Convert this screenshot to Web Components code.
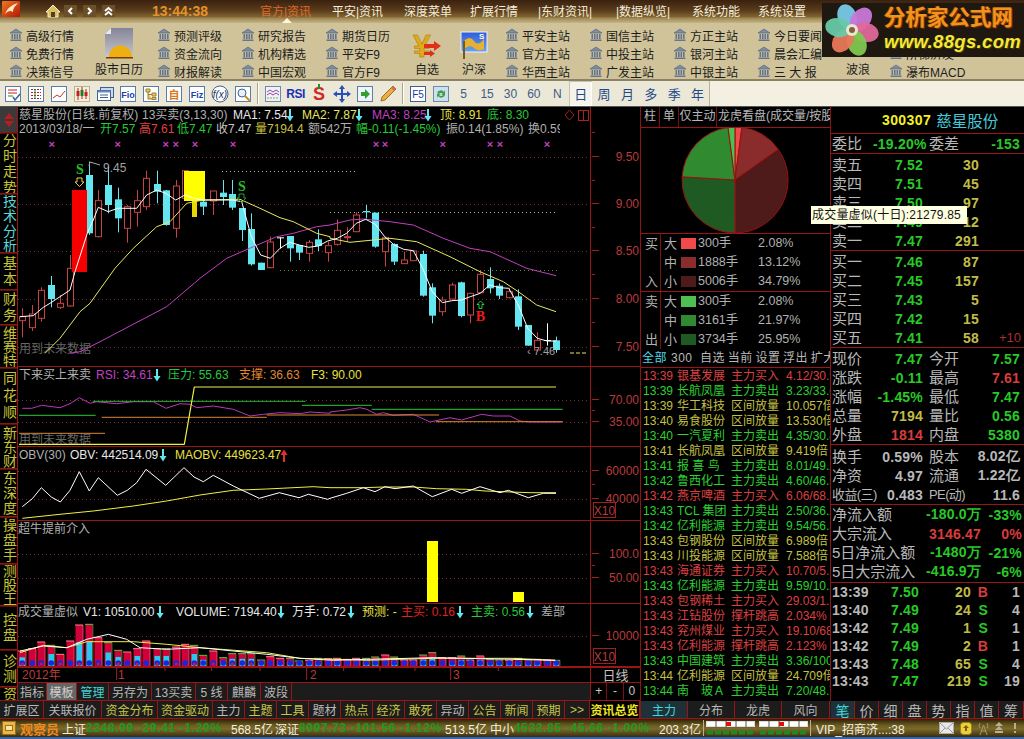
<!doctype html>
<html lang="zh"><head><meta charset="utf-8"><title>分析家</title>
<style>
html,body{margin:0;width:1024px;height:739px;overflow:hidden;background:#000}
body{font:12px "Liberation Sans","Noto Sans CJK SC",sans-serif;color:#b8b8b8}
</style></head>
<body>
<app-shell>
  <top-bar slot="top"></top-bar>
  <tool-bar slot="tools"></tool-bar>
  <icon-bar slot="icons"></icon-bar>
  <side-rail slot="rail"></side-rail>
  <chart-col slot="chart">
    <k-pane kind="main" top="107" h="259"></k-pane>
    <k-pane kind="rsi" top="366" h="80"></k-pane>
    <k-pane kind="obv" top="446" h="74"></k-pane>
    <k-pane kind="bull" top="520" h="83"></k-pane>
    <k-pane kind="vol" top="603" h="63"></k-pane>
    <x-axis></x-axis>
    <tab-row style="--h:18px;--w:622px">
      <s-tab w="29">指标</s-tab><s-tab w="30" tone="sel">模板</s-tab><s-tab w="32" tone="c">管理</s-tab><s-tab w="43">另存为</s-tab><s-tab w="44">13买卖</s-tab><s-tab w="32">5 线</s-tab><s-tab w="33">麒麟</s-tab><s-tab w="31">波段</s-tab>
      <pm-box slot="end"></pm-box>
    </tab-row>
  </chart-col>
  <pie-panel slot="pie"></pie-panel>
  <quote-panel slot="quote"></quote-panel>
  <tab-row slot="strip" style="--h:18px;--w:640px">
    <s-tab w="44">扩展区</s-tab><s-tab w="58">关联报价</s-tab><s-tab w="56" tone="y">资金分布</s-tab><s-tab w="55" tone="y">资金驱动</s-tab><s-tab w="32">主力</s-tab><s-tab w="32" tone="y">主题</s-tab><s-tab w="32" tone="y">工具</s-tab><s-tab w="32">题材</s-tab><s-tab w="32" tone="y">热点</s-tab><s-tab w="32" tone="y">经济</s-tab><s-tab w="32" tone="y">敢死</s-tab><s-tab w="32">异动</s-tab><s-tab w="32" tone="y">公告</s-tab><s-tab w="32" tone="y">新闻</s-tab><s-tab w="32" tone="y">预期</s-tab><s-tab w="25" tone="y">&gt;&gt;</s-tab><s-tab w="50" tone="hot">资讯总览</s-tab>
  </tab-row>
  <tab-row slot="strip2" style="--h:18px;--w:190px">
    <s-tab w="47" tone="teal">主力</s-tab><s-tab w="47">分布</s-tab><s-tab w="47">龙虎</s-tab><s-tab w="48">风向</s-tab>
  </tab-row>
  <tab-row slot="strip3" style="--h:18px;--w:193px">
    <s-tab w="24" tone="teal" big>笔</s-tab><s-tab w="24" big>价</s-tab><s-tab w="24" big>细</s-tab><s-tab w="24" big>盘</s-tab><s-tab w="24" big>势</s-tab><s-tab w="24" big>指</s-tab><s-tab w="24" big>值</s-tab><s-tab w="25" big>筹</s-tab>
  </tab-row>
  <status-bar slot="status"></status-bar>
  <logo-badge slot="over"></logo-badge>
  <float-tip slot="over">成交量虚似(十日):21279.85</float-tip>
</app-shell>
<script>
function def(name,css,html){
  class C extends HTMLElement{
    constructor(){super();const r=this.attachShadow({mode:'open'});
      r.innerHTML='<style>'+css+'</style>'+(typeof html==='function'?html(this):html);}
  }
  customElements.define(name,C);
}
/* ---------- shell ---------- */
def('app-shell',`
:host{display:grid;position:relative;width:1024px;height:739px;overflow:hidden;background:#000;
 grid-template-columns:18px 622px 1px 189px 1px 193px;grid-template-rows:23px 58px 26px 594px 18px 18px 2px}
.top{grid-column:1/-1}.s1{grid-column:1/3;grid-row:5}.s2{grid-column:4;grid-row:5}.s3{grid-column:6;grid-row:5}
.st{grid-column:1/-1;grid-row:6}.bl{grid-column:1/-1;grid-row:7;background:#2f66b4}
.v{background:#8e1414;grid-row:4/6}
`,`<div class="top"><slot name="top"></slot></div><div class="top"><slot name="tools"></slot></div><div class="top"><slot name="icons"></slot></div>
<slot name="rail"></slot><slot name="chart"></slot><div class="v"></div><slot name="pie"></slot><div class="v"></div><slot name="quote"></slot>
<div class="s1"><slot name="strip"></slot></div><div class="s2"><slot name="strip2"></slot></div><div class="s3"><slot name="strip3"></slot></div>
<div class="st"><slot name="status"></slot></div><div class="bl"></div><slot name="over"></slot>`);

/* ---------- top bar ---------- */
const menu=[['官方|资讯',260,'#e06a28'],['平安|资讯',332],['深度菜单',404],['扩展行情',470],['|东财资讯|',538],['|数据纵览|',616],['系统功能',692],['系统设置',758],['',806]];
def('top-bar',`
:host{display:flex;height:23px;position:relative;box-sizing:border-box;padding-bottom:2px;align-items:center;color:#f0ead8;
 background:linear-gradient(#3a2110 0,#5a3b1b 45%,#7f6230 72%,#a08a55 80%,#c5b487 100%)}
.lg{width:18px;height:16px;margin-left:2px;margin-top:-3px}
.n{display:flex;align-items:center;margin-left:25px;width:80px}
.n svg{display:block}
.t{font:700 14px "Liberation Sans",sans-serif;color:#e4912a;width:55px;margin-left:27px;white-space:nowrap}
.m{display:flex;margin-left:53px}.m span{white-space:nowrap}
.tri{position:absolute;left:282px;top:18px;border:5px solid transparent;border-top:0;border-bottom:5px solid #fff6d8}
`,()=>`<svg class="lg" viewBox="0 0 18 16"><defs><linearGradient id="o" x1="0" y1="0" x2="1" y2="1"><stop offset="0" stop-color="#f07820"/><stop offset="1" stop-color="#b01808"/></linearGradient></defs><rect width="18" height="16" rx="1" fill="url(#o)"/><path d="M3 13C6 6 10 4 16 2 12 6 11 8 11 11 8 9 6 10 3 13Z" fill="#ffe6c0"/></svg>
<div class="n">
<svg width="16" height="14" viewBox="0 0 16 14"><path d="M8 1 1 8h2v5h10V8h2z" fill="#d8c060" stroke="#f8f0c8"/><rect x="6" y="8" width="4" height="5" fill="#5a3b1b"/></svg>
<svg style="margin-left:3px" width="13" height="12" viewBox="0 0 13 12"><rect width="13" height="12" fill="#6a4f2a"/><path d="M8 3 5 6l3 3" fill="none" stroke="#fff" stroke-width="2"/></svg>
<svg style="margin-left:6px" width="13" height="12" viewBox="0 0 13 12"><rect width="13" height="12" fill="#6a4f2a"/><path d="M5 3l3 3-3 3" fill="none" stroke="#fff" stroke-width="2"/></svg>
<svg style="margin-left:6px" width="13" height="12" viewBox="0 0 13 12"><rect width="13" height="12" fill="#6a4f2a"/><path d="M3 6l3.500-3L10 6M3 10l3.500-3L10 10" fill="none" stroke="#fff" stroke-width="1.800"/></svg>
</div><div class="t">13:44:38</div>
<div class="m">${menu.slice(0,-1).map((m,i)=>`<span style="width:${menu[i+1][1]-m[1]}px;color:${m[2]||'#f4eedc'}">${m[0]}</span>`).join('')}</div><div class="tri"></div>`);

/* ---------- tool bar ---------- */
const bank=`<svg width="14" height="14" viewBox="0 0 14 14"><path d="M7 1l6 4H1z" fill="#7d8da8" stroke="#4c5a74" stroke-width=".6"/><g fill="#64748f"><rect x="2.500" y="6" width="1.600" height="5"/><rect x="5" y="6" width="1.600" height="5"/><rect x="7.500" y="6" width="1.600" height="5"/><rect x="10" y="6" width="1.600" height="5"/><rect x="1.500" y="11.500" width="11" height="1.500"/></g></svg>`;
const col=(w,a)=>`<div class="col" style="width:${w}px">${a.map(t=>`<div class="it">${t?bank:''}<span>${t}</span></div>`).join('')}</div>`;
const big=(w,ic,t,after)=>`<div class="big" style="width:${w}px;margin-right:${after}px"><div class="ic">${ic}</div><span>${t}</span></div>`;
def('tool-bar',`
:host{display:flex;height:58px;box-sizing:border-box;padding-left:9px;color:#1c1c1c;
 background:#d0c399;border-bottom:2px solid #8b8263;overflow:hidden}
.col{display:grid;grid-auto-rows:18px;padding-top:3px;flex:none}
.it{display:flex;align-items:center;gap:3px;white-space:nowrap}.it svg{flex:none}
.big{display:flex;flex-direction:column;align-items:center;white-space:nowrap;flex:none}
.ic{height:38px;display:flex;align-items:flex-end;justify-content:center;margin-bottom:1px}
.big span{line-height:18px}
`,()=>col(86,['高级行情','免费行情','决策信号'])
+big(48,`<svg width="28" height="33" viewBox="0 0 28 33"><defs><linearGradient id="c" x1="0" y1="0" x2="0" y2="1"><stop offset="0" stop-color="#84849a"/><stop offset="1" stop-color="#c9c6c8"/></linearGradient></defs><path d="M6 1H28V30H0V7z" fill="url(#c)"/><path d="M6 1V7H0z" fill="#ece8f0"/><path d="M4 30a11 11 0 0 1 23 0z" fill="#eeb010"/><rect x="1" y="30" width="27" height="1.500" fill="#7a3a00"/></svg>`,'股市日历',14)
+col(84,['预测评级','资金流向','财报解读'])+col(84,['研究报告','机构精选','中国宏观'])+col(88,['期货日历','平安F9','官方F9'])
+big(28,`<svg width="30" height="28" viewBox="0 0 30 28"><text x="1" y="25" font-family="Liberation Sans" font-weight="700" font-size="32" fill="#e0aa18" stroke="#a87808" stroke-width=".5">¥</text><path d="M12 12h10V9l7 5-7 5v-3H12zM12 20h6v-2l5 3.500-5 3.500v-2h-6z" fill="#e03018"/></svg>`,'自选',19)
+big(28,`<svg width="30" height="30" viewBox="0 0 30 30"><defs><linearGradient id="b" x1="0" y1="0" x2="0" y2="1"><stop offset="0" stop-color="#2c5cd8"/><stop offset="1" stop-color="#6ca4e8"/></linearGradient></defs><rect x="2" y="2" width="26" height="20" fill="url(#b)" stroke="#eef"/><path d="M5 11q6-6 10 0t10-2v10q-6 3-10-1t-10 1z" fill="#e8b030"/><path d="M5 11v18" stroke="#7a5a10" stroke-width="2"/><text x="20" y="9" font-size="8" font-weight="700" fill="#fff">S</text></svg>`,'沪深',17)
+col(84,['平安主站','官方主站','华西主站'])+col(84,['国信主站','中投主站','广发主站'])+col(84,['方正主站','银河主站','中银主站'])+col(84,['今日要闻','晨会汇编','三 大 报'])
+big(34,'','波浪',14)+col(90,['吸拉派送','阶梯济发','瀑布MACD']));

/* ---------- icon bar ---------- */
const box=(inner,stroke='#5b7ea8',fill='#fff')=>`<svg width="18" height="18" viewBox="0 0 18 18"><rect x="1.500" y="1.500" width="15" height="15" fill="${fill}" stroke="${stroke}"/>${inner}</svg>`;
const lbl=(t,c='#1c3fa8',s=9)=>`<text x="9" y="13" text-anchor="middle" font-size="${s}" font-weight="700" fill="${c}">${t}</text>`;
const icons=[
 box(`<path d="M4 5h9M4 8h9" stroke="#c02020"/><path d="M4 11h5" stroke="#2a8a2a"/><path d="M9 12l2 3 5-6" stroke="#406090" fill="none" stroke-width="1.500"/>`),
 box(`<path d="M4 4.500h10M4 7.500h10M4 10.500h10M4 13.500h10" stroke="#b02020" stroke-dasharray="2 1"/><path d="M8 4v10" stroke="#2a8a2a"/>`),
 box(`<path d="M3 13l4-3 3 2 5-6" stroke="#d03030" fill="none"/>`),
 box(`<path d="M5 3v12M9 2v12M13 4v10" stroke="#b02020"/><rect x="3.500" y="6" width="3" height="5" fill="#c02020"/><rect x="7.500" y="5" width="3" height="6" fill="#208020"/><rect x="11.500" y="7" width="3" height="4" fill="#c02020"/>`,'#c0b090','#f4f0e0'),
 `<svg width="18" height="18" viewBox="0 0 18 18"><rect x="4.500" y="2.500" width="13" height="10" fill="#c8d8f0" stroke="#406090"/><rect x="1.500" y="5.500" width="13" height="10" fill="#fff" stroke="#406090"/><rect x="1.500" y="5.500" width="13" height="2" fill="#6888c0"/><path d="M4 10h8M4 12.500h8" stroke="#406090"/></svg>`,
 box(lbl('Fio')),
 box(`<path d="M4 4h4v3H4zM10 8h4v3h-4zM10 12.500h4v2h-4zM6 7v7h4M6 9.500h4" fill="#e8c860" stroke="#a08030"/>`),
 box(`<text x="9" y="13.500" text-anchor="middle" font-size="11" fill="#d87a20" font-weight="700">自</text>`),
 box(lbl('Fiz')),
 `<svg width="18" height="18" viewBox="0 0 18 18"><ellipse cx="9" cy="9" rx="8" ry="8" fill="#fff" stroke="#406090"/><text x="9" y="13" text-anchor="middle" font-size="10" font-style="italic" fill="#203060">f(x)</text></svg>`,
 box(`<circle cx="8" cy="8" r="4" fill="#e8f0f8" stroke="#406090"/><path d="M11 11l5 5" stroke="#c09030" stroke-width="2"/>`),
 0,
 box(`<path d="M3 7l3-2 3 2 3-2 3 2M3 10l3-2 3 2 3-2 3 2" fill="none" stroke="#a040a0"/><path d="M3 13h12" stroke="#a0a040" stroke-dasharray="2 1"/>`,'#6a8ab0','#eef2f8'),
 `<span style="font:700 12px 'Liberation Sans';color:#1c2fb8;letter-spacing:-.5px">RSI</span>`,
 `<svg width="16" height="20" viewBox="0 0 16 20"><text x="8" y="16" text-anchor="middle" font-size="18" font-weight="700" font-family="Liberation Sans" fill="#d02828">S</text><path d="M8 0v5" stroke="#209020" stroke-width="2"/></svg>`,
 `<svg width="18" height="18" viewBox="0 0 18 18"><path d="M9 0l3 4h-2v4h4V6l4 3-4 3v-2h-4v4h2l-3 4-3-4h2v-4H4v2L0 9l4-3v2h4V4H6z" fill="#2a50b8"/></svg>`,
 box(`<path d="M5 7h4V4l5 5-5 5v-3H5z" fill="#30a030"/>`,'#5b7ea8','#eef4fa'),
 `<svg width="18" height="18" viewBox="0 0 18 18"><path d="M14 1l3 3L6 15l-4 1 1-4z" fill="#e8b040" stroke="#a06a20"/><path d="M14 1l3 3-2 2-3-3z" fill="#d86a6a"/></svg>`,
 0,
 box(`<text x="9" y="13" text-anchor="middle" font-size="10" fill="#1c3f98">F5</text>`,'#406090','#fff'),
 box(`<path d="M5 8a4 4 0 0 1 7-1l1-2v5H9l2-1a2.500 2.500 0 0 0-4 0zM13 10a4 4 0 0 1-7 1l-1 2V9h4l-2 1a2.500 2.500 0 0 0 4 0z" fill="#38a048"/>`,'#6a8ab0','#cfe0ec')
];
def('icon-bar',`
:host{display:flex;height:26px;box-sizing:border-box;padding-left:1px;align-items:stretch;background:#ece8d8;border-bottom:1px solid #555;color:#2c4a80;overflow:hidden}
.i{width:23px;display:flex;align-items:center;justify-content:center;flex:none}.i svg{display:block}
.sp{width:7px;flex:none;display:flex;justify-content:center}.sp i{width:1px;margin:2px 0;background:#aaa48c;box-shadow:1px 0 #fff}
.p{width:23.400px;flex:none;display:flex;align-items:center;justify-content:center;font-size:12px;color:#3c5a88}
.d{font-size:13px;color:#1f4a8a}.on{background:#f6f4ea;box-shadow:inset 1px 1px #c8c4b0,inset -1px -1px #fff}
.r{flex:1;background:#f3f0e2;border-left:1px solid #b8b49c}
`,()=>icons.map(i=>i?`<div class="i">${i}</div>`:`<div class="sp"><i></i></div>`).join('')
+['5','15','30','60','N'].map(t=>`<div class="p">${t}</div>`).join('')
+['日','周','月','多','季','年'].map((t,i)=>`<div class="p d${i?'':' on'}">${t}</div>`).join('')
+`<div class="r"></div>`);

/* ---------- side rail ---------- */
const rail=[['分时走势',61,0,1.5],['技术分析',59,1,1],['基本',37,0,2],['财务',35,0,2],['维赛特',43,0,0],['同花顺',56,0,3],['新东财',45,0,0],['东深度',48,0,1],['操盘手',47,0,1],['测股王',42,0,0],['控盘',44,0,1],['诊测',37,0,1],['资',14,0,0]];
def('side-rail',`
:host{display:block;width:18px;height:594px;box-sizing:border-box;border-right:1px solid #9a1616;background:#202020;overflow:hidden}
.u{height:26px;display:flex;flex-direction:column;align-items:center;justify-content:center;gap:2px;background:#3a3a3a;box-sizing:border-box;border-bottom:1px solid #8e1414}
.up{border:5px solid transparent;border-top:0;border-bottom:6px solid #b81c1c}.dn{border:5px solid transparent;border-bottom:0;border-top:6px solid #b81c1c}
.t{box-sizing:border-box;writing-mode:vertical-rl;text-orientation:upright;font-size:14px;line-height:17px;color:#c8c438;background:#000;border-bottom:1px solid #8e1414;border-top:1px solid #5a1010;display:flex;align-items:center;justify-content:center;overflow:hidden;white-space:nowrap;width:17px}
.a{color:#58d8d8}
`,()=>`<div class="u"><div class="up"></div><div class="dn"></div></div>`+rail.map(r=>`<div class="t${r[2]?' a':''}" style="height:${r[1]}px;letter-spacing:${r[3]}px">${r[0]}</div>`).join(''));

/* ---------- chart ---------- */
def('chart-col',`:host{display:flex;flex-direction:column;width:622px;height:594px;overflow:hidden}`,`<slot></slot>`);
const Z3=p=>[p[0]/3,105+p[1]/3],Z4=p=>[330+p[0]/3,105+p[1]/3],Z9=p=>[p[0]/3,360+p[1]/3],Z12=p=>[330+p[0]/3,360+p[1]/3],Z10=p=>[p[0]/3,600+p[1]/3];
const poly=(pts,c,w=1,extra='')=>`<polyline fill="none" stroke="${c}" stroke-width="${w}" stroke-linejoin="round" points="${pts.map(p=>p[0].toFixed(1)+','+p[1].toFixed(1)).join(' ')}" ${extra}/>`;
const dot=(y,x1=18,x2=590,c='#7a2a2a')=>`<line x1="${x1}" x2="${x2}" y1="${y+.5}" y2="${y+.5}" stroke="${c}" stroke-dasharray="1 3"/>`;
const R='#c84444',C='#64e6f0';
const c3=[[67,610,635,647,697,R],[97,600,627,668,678,R],[124,547,556,640,650,R],[154,513,540,582,607,C],[181,570,595,607,612,R],[210,450,490,603,605,R],[238,0,0,0,0,'x'],[268,170,210,385,390,C],[295,255,287,395,397,R],[325,180,240,300,325,C],[353,248,283,340,382,C],[382,300,305,370,413,R],[410,255,287,322,365,R],[439,197,220,305,315,R],[470,197,237,260,295,C],[497,255,256,360,362,C],[527,225,243,370,398,R],[555,197,197,280,285,R],[583,200,210,250,260,C],[610,285,290,305,330,C],[640,258,258,288,330,R],[668,225,263,276,300,C],[697,225,267,308,315,C],[725,309,309,375,408,C],[754,325,372,478,482,C],[782,473,473,495,495,C],[811,395,411,488,490,R],[840,397,397,399,430,'#fff'],[869,393,393,430,470,C],[898,420,420,443,465,C],[926,405,412,445,470,R],[955,373,403,423,438,C],[983,410,422,443,470,R]];
const c4=[[22,343,376,418,422,R],[50,367,395,397,410,R],[79,322,330,380,382,R],[107,300,318,322,340,C],[136,323,323,425,428,C],[164,395,397,440,485,R],[193,415,417,470,480,C],[221,440,465,476,476,R],[250,437,438,467,467,R],[278,437,447,572,575,C],[307,535,547,632,655,C],[337,575,585,620,632,R],[365,533,540,582,583,R],[394,530,532,633,637,C],[421,563,565,630,655,R],[451,495,508,563,563,R],[479,487,522,550,565,C],[508,535,542,572,582,C],[536,548,560,578,580,R],[565,553,574,665,675,C],[593,660,660,722,722,C],[622,682,706,735,740,R],[651,655,705,707,722,'#fff'],[679,695,706,735,743,C]];
function candle(a,Z){const [x,wt,bt,bb,wb,c]=a;if(c==='x')return'';
  const cx=Math.round(Z([x,0])[0])+.5,f=v=>Z([0,v])[1];let s=`<line x1="${cx}" x2="${cx}" y1="${f(wt)}" y2="${f(wb)}" stroke="${c}"/>`;
  const h=Math.max(1,f(bb)-f(bt));
  if(c===C)s+=`<rect x="${cx-3.5}" y="${f(bt)}" width="7" height="${h}" fill="${C}"/>`;
  else if(c===R)s+=`<rect x="${cx-3}" y="${f(bt)}" width="6" height="${h}" fill="#000" stroke="${c}"/>`;
  else s+=`<rect x="${cx-3.5}" y="${f(bt)}" width="7" height="1" fill="${c}"/>`;
  return s;}
const txt=(x,y,t,c,extra='')=>`<text x="${x}" y="${y}" fill="${c}" ${extra}>${t}</text>`;
const dArrow=(x,y,c,fill='none')=>`<path d="M${x-2.5} ${y}h5v4h2l-4.500 4.500-4.500-4.500h2z" fill="${fill}" stroke="${c}"/>`;
const uArrow=(x,y,c)=>`<path d="M${x} ${y}l3.500 3.500h-2v4h-3v-4h-2z" fill="none" stroke="${c}"/>`;
const volTops=[150,143,123,133,160,120,72,70,110,125,148,153,143,120,143,143,138,130,133,163,150,170,158,158,158,177,167,172,172,180,178,172,173,172,175,172,172,168,162,168,177,177,162,155,170,170,165,177,165,175,177,178,172,176,175,177,178];
const xs=[...c3.map(a=>a[0]),...c4.map(a=>a[0]+990)];
const cyanDay=[...c3,...c4].map(a=>a[5]===C);
const draw={
 main(){
  const W=[[60,635],[100,632],[130,607],[150,595],[180,575],[210,555],[225,500],[262,385],[280,345],[295,307],[325,320],[353,310],[410,310],[440,270],[470,255],[497,265],[527,285],[555,270],[583,280],[610,285],[640,285],[697,285],[725,290],[754,395],[782,450],[811,460],[840,430],[869,412],[898,420],[926,427],[955,423],[983,408]].map(Z3).concat([[22,400],[50,385],[79,355],[107,343],[136,358],[164,395],[193,420],[221,433],[250,437],[278,490],[307,560],[337,593],[365,587],[394,585],[421,575],[451,565],[479,540],[508,548],[536,550],[565,600],[593,670],[622,700],[651,708],[679,708]].map(Z4));
  const Y=[[135,745],[180,700],[240,620],[270,595],[345,490],[400,430],[470,365],[510,350],[560,295],[610,285],[720,283],[780,310],[840,338],[880,350],[950,385],[990,395]].map(Z3).concat([[0,400],[60,412],[130,405],[180,400],[260,410],[360,455],[450,500],[520,530],[565,560],[620,600],[678,620]].map(Z4));
  const M=[[210,745],[240,740],[300,710],[500,605],[600,520],[680,460],[760,425],[830,395],[880,385],[950,365],[990,360]].map(Z3).concat([[0,360],[60,345],[100,342],[180,350],[250,360],[340,400],[420,430],[480,440],[590,490],[678,512]].map(Z4));
  let s=[157,204,251,299,347].map(y=>dot(y)).join('');
  s+=dot(171,222,357,'#b8b8a0')+dot(212,330,557,'#b8b8a0')+dot(270,280,557,'#5a8a4a');
  [155,353,497,527,585,699].map(x=>x/3).concat([138,165,338,480,510,651].map(x=>330+x/3)).forEach(x=>{s+=txt(x,148,'×','#c040c0','text-anchor="middle" font-size="11" font-weight="700"')});
  s+=txt(19,353,'用到未来数据','#666');
  s+=c3.map(a=>candle(a,Z3)).join('')+c4.map(a=>candle(a,Z4)).join('');
  s+=`<rect x="72" y="190" width="15" height="82" fill="#f40000"/><rect x="184" y="171" width="21" height="30" fill="#ffff00"/><rect x="192" y="201" width="5" height="16" fill="#e8d800"/>`;
  s+=poly(M,'#c040c0')+poly(Y,'#e8e860')+poly(W,'#fff');
  s+=txt(103,172,'9.45','#a0a0a0','font-size="12"')+poly([[89,166],[90,162],[100,165]],'#aaa');
  s+=`<text x="80" y="174" fill="#20c020" font-family="Liberation Serif" font-weight="700" font-size="14" text-anchor="middle">S</text>`+dArrow(79.500,178,'#f0d040');
  s+=`<text x="242" y="191" fill="#20c020" font-family="Liberation Serif" font-weight="700" font-size="14" text-anchor="middle">S</text>`+dArrow(241.500,194,'#20a030');
  s+=`<text x="480.500" y="321" fill="#f01818" font-family="Liberation Serif" font-weight="700" font-size="14" text-anchor="middle">B</text>`+uArrow(480.500,301,'#20d040');
  s+=txt(527,355,'‹ 7.46','#a0a0a0','font-size="11"');
  s+=`<line x1="570" x2="588" y1="353" y2="353" stroke="#e8e860" stroke-dasharray="4 2"/>`;
  s+=`<path d="M569.500 110l4.500 5-4.500 5-4.500-5z" fill="none" stroke="#a02020"/><rect x="578.500" y="110.500" width="10" height="10" fill="none" stroke="#b02020"/><line x1="583.500" x2="583.500" y1="110" y2="120" stroke="#b02020"/>`;
  return s;},
 rsi(){
  let s=dot(399)+dot(421);
  const Yl=[[57,250],[553,250],[583,78],[990,78]].map(Z9).concat([[678,78]].map(Z12));
  const Mg=[[67,142],[95,142],[125,133],[180,140],[210,128],[238,110],[270,127],[290,122],[350,128],[400,122],[460,122],[498,142],[540,128],[570,130],[590,140],[640,135],[700,145],[750,165],[790,160],[840,155],[900,158],[930,153],[990,157]].map(Z9).concat([[0,153],[50,147],[90,140],[110,145],[140,160],[160,155],[190,163],[250,160],[300,183],[360,170],[395,177],[455,160],[490,165],[540,165],[570,180],[600,183],[695,183]].map(Z12));
  s+=txt(19,443,'用到未来数据','#666');
  s+=poly(Mg,'#b838b8');
  s+=poly([[57,163],[287,163]].map(Z9),'#28c838')+poly([[278,121],[917,121]].map(Z9),'#28b838')+poly([[906,133],[990,133]].map(Z9).concat([[125,133]].map(Z12)),'#28c838')+poly([[125,145],[698,145]].map(Z12),'#28c838');
  s+=poly([[57,217],[315,217]].map(Z9),'#e08830')+poly([[305,169],[800,169]].map(Z9),'#e08830')+poly([[800,162],[990,162]].map(Z9).concat([[327,162]].map(Z12)),'#e08830')+poly([[318,182],[698,182]].map(Z12),'#e08830');
  s+=poly(Yl,'#f0f040',1.2);
  return s;},
 obv(){
  let s=dot(470)+dot(498);
  s+=poly([[67,472],[180,460],[280,450],[400,435],[500,420],[600,402],[700,388],[800,384],[940,377],[990,380]].map(Z9).concat([[0,380],[100,380],[160,378],[250,378],[320,383],[410,385],[465,390],[600,395],[678,395]].map(Z12)),'#f0f040');
  s+=poly([[67,437],[97,413],[124,380],[154,408],[181,423],[210,388],[238,332],[268,390],[295,350],[352,403],[382,388],[410,365],[438,325],[497,373],[552,320],[582,348],[610,362],[640,343],[700,375],[778,412],[838,395],[897,410],[925,400],[983,415]].map(Z9).concat([[0,412],[50,397],[100,380],[135,392],[165,377],[195,383],[250,375],[307,407],[365,385],[395,397],[450,377],[510,395],[535,388],[595,410],[640,397],[678,397]].map(Z12)),'#fff');
  return s;},
 bull(){return dot(553)+dot(577)+`<rect x="427" y="540" width="11" height="61" fill="#ffff00"/><rect x="513" y="591" width="11" height="10" fill="#ffff00"/>`;},
 vol(){
  let s=dot(635);const base=665;
  xs.forEach((z,i)=>{const x=Math.round(z/3),top=600+volTops[i]/3,h=base-top,cy=cyanDay[i];
   s+=`<rect x="${x-3.5}" y="${top}" width="7.500" height="${h}" fill="#d00038"/>`;
   s+=`<line x1="${x+4}" x2="${x+4}" y1="${top}" y2="${base}" stroke="${cy?'#208a28':'#f05070'}" stroke-width=".8"/><line x1="${x-4}" x2="${x+4}" y1="${top}" y2="${top}" stroke="${cy?'#60c040':'#ff8090'}"/>`;
   if(cy||i%3==0){const ih=h*.58;s+=`<rect x="${x-2.5}" y="${base-ih}" width="5.500" height="${ih}" fill="#28c8f0"/>`;}
   s+=`<circle cx="${x+.3}" cy="${base-3}" r="2.800" fill="#1428e0"/>`;
   if(i<26&&i%2==0)s+=`<circle cx="${x+.3}" cy="${base-2}" r="1.500" fill="#e01030"/>`;
  });
  s+=poly([[60,155],[130,133],[200,140],[260,122],[400,122],[500,130],[600,140],[800,155],[900,172],[1100,178],[1300,172],[1536,172],[1666,178]].map(Z10),'#f0f040');
  s+=poly([[60,150],[130,135],[200,140],[260,115],[325,100],[380,115],[420,140],[500,145],[600,140],[700,150],[800,160],[900,172],[1000,178],[1100,175],[1300,170],[1536,175],[1666,178]].map(Z10),'#fff');
  return s;}
};
const heads={
 main:[[['慈星股份(日线.前复权)','#b0b0b0',19],['13买卖(3,13,30)','#b0b0b0',142],['MA1: 7.54','#e8e8e8',233],['↓',C,286],['MA2: 7.87','#e8e860',302],['↓',C,355],['MA3: 8.25','#c040c0',372],['↓',C,424],['顶: 8.91','#e8e040',440],['底: 8.30','#28c838',487,60]],
  [['2013/03/18/一','#b0b0b0',19],['开7.57','#28c838',100],['高7.61','#e04040',139],['低7.47','#28c838',177],['收7.47','#c8c8c8',216],['量7194.4','#c8c040',255],['额542万','#b0b0b0',308],['幅-0.11(-1.45%)','#28c838',356],['振0.14(1.85%)','#b0b0b0',446],['换0.59','#b0b0b0',528,32]]],
 rsi:[[['下来买上来卖','#b0b0b0',19],['RSI: 34.61','#c040c0',96],['↓',C,153],['压力: 55.63','#28c838',168],['支撑: 36.63','#e08830',239],['F3: 90.00','#e8e040',311,60]]],
 obv:[[['OBV(30)','#b0b0b0',19],['OBV: 442514.09','#e8e8e8',70],['↓',C,159],['MAOBV: 449623.47','#e8e040',175],['↑','#e03030',280,14]]],
 bull:[[['超牛提前介入','#b0b0b0',18,90]]],
 vol:[[['成交量虚似','#b0b0b0',18],['V1: 10510.00','#e8e8e8',83],['↓',C,156],['VOLUME: 7194.40','#e8e8e8',176],['↓',C,277],['万手: 0.72','#e8e8e8',292],['↓',C,347],['预测: -','#e8e040',362],['主买: 0.16','#e02020',401],['↓',C,456],['主卖: 0.56','#28c838',471],['↓',C,526],['差部','#b0b0b0',541,40]]]
};
const axes={
 main:{t:[[157,'9.50'],[204,'9.00'],[251,'8.50'],[299,'8.00'],[347,'7.50']],m:[133,181,228,275,323]},
 rsi:{t:[[399,'70.00'],[421,'35.00']],m:[410]},
 obv:{t:[[470,'60000'],[498,'40000']],m:[484]},
 bull:{t:[[553,'100.0'],[577,'50.00']],m:[565]},
 vol:{t:[[635,'10000']],m:[]}
};
function axisSvg(kind,top,h){const a=axes[kind];let s=`<svg width="50" height="${h-1}" viewBox="590 ${top+1} 50 ${h-1}" style="display:block;font-size:12px">`;
 a.m.forEach(y=>s+=`<line x1="591" x2="594" y1="${y+.5}" y2="${y+.5}" stroke="#a02020"/>`);
 a.t.forEach(t=>{s+=`<line x1="591" x2="598" y1="${t[0]+.5}" y2="${t[0]+.5}" stroke="#a02020"/><text x="638" y="${t[0]+4.500}" text-anchor="end" fill="#b83c3c">${t[1]}</text>`;});
 if(kind==='obv'||kind==='vol'){const y=kind==='obv'?502:648;s+=`<rect x="592.500" y="${y+.5}" width="22" height="15" fill="#000" stroke="#a02020"/><text x="603.500" y="${y+12.500}" text-anchor="middle" fill="#b83c3c">X10</text>`;}
 return s+'</svg>';}
const arrowSvg=(up,c,w)=>`<span style="width:${w}px;height:14px"><svg width="8" height="13" viewBox="0 0 8 13" style="position:static;display:block;margin-top:1px"><g transform="${up?'translate(0 13) scale(1 -1)':''}"><path d="M4 0v8" stroke="${c}" stroke-width="2"/><path d="M.5 7h7L4 12.500z" fill="${c}"/></g></svg></span>`;
def('k-pane',`
:host{display:grid;grid-template-columns:572px 50px;box-sizing:border-box;overflow:hidden;border-top:1px solid #9a1616;height:var(--ph);font-size:12px}
:host([kind=main]){border-top:0}
.plot{position:relative;overflow:hidden}
.plot>svg{position:absolute;left:0;top:0;display:block}
.hd{position:relative;padding:1px 0 0 0}
.row{display:flex;height:14px;line-height:14px;white-space:nowrap}
.row span{flex:none;white-space:nowrap}
.clip{overflow:hidden}
.ar{border-left:1px solid #9a1616}
`,el=>{const k=el.getAttribute('kind'),top=+el.getAttribute('top'),h=+el.getAttribute('h');el.style.setProperty('--ph',h+'px');
 const rows=heads[k].map(r=>{const pad=r[0][2]-18;return `<div class="row" style="padding-left:${pad}px">`+r.map((it,i)=>{const w=it[3]||r[i+1][2]-it[2];
   if(it[0]==='↓'||it[0]==='↑')return arrowSvg(it[0]==='↑',it[1],w);
   return `<span class="${it[3]==32?'clip':''}" style="width:${w}px;color:${it[1]}">${it[0]}</span>`}).join('')+'</div>';}).join('');
 return `<div class="plot"><svg width="572" height="${h}" viewBox="18 ${top} 572 ${h}" style="font-size:12px">${draw[k]()}</svg><div class="hd">${rows}</div></div><div class="ar">${axisSvg(k,top,h)}</div>`;});
def('x-axis',`
:host{display:grid;grid-template-columns:572px 50px;height:17px;box-sizing:border-box;border-top:2px solid #9a1616;border-bottom:1px solid #9a1616;overflow:hidden}
svg{display:block;font-size:12px}
.d{border-left:1px solid #9a1616;text-align:center;line-height:15px;color:#c0c0c0;font-size:13px}
`,()=>{let s='<svg width="572" height="14" viewBox="18 668 572 14">';
 [350,920,1352].forEach(z=>s+=`<line x1="${z/3}" x2="${z/3}" y1="668" y2="680" stroke="#a02020"/>`);
 [495,635,780,1030,1140,1245,1495].forEach(z=>s+=`<line x1="${z/3}" x2="${z/3}" y1="668" y2="671" stroke="#a02020"/>`);
 s+=`<text x="22" y="679" fill="#b83c3c">2012年</text><text x="118" y="679" fill="#b83c3c">1</text><text x="310" y="679" fill="#b83c3c">2</text><text x="453" y="679" fill="#b83c3c">3</text></svg>`;
 return s+'<div class="d">日线</div>';});
def('tab-row',`
:host{display:flex;height:var(--h);width:var(--w);background:#1c1c1c;box-sizing:border-box;border-bottom:1px solid #9a1616;overflow:hidden}
.m{flex:1;display:flex;min-width:0}
`,`<div class="m"><slot></slot></div><slot name="end"></slot>`);
def('s-tab',`
:host{display:flex;align-items:center;justify-content:center;box-sizing:border-box;flex:none;height:100%;border-right:1px solid #9a1616;white-space:nowrap;color:#b8b8b8;font-size:12px;background:#1c1c1c;width:var(--tw)}
:host([big]){font-size:14px}
:host([tone=y]){color:#c8c448}:host([tone=c]){color:#40d8d8}:host([tone=sel]){background:#666;color:#d0d0d0}
:host([tone=hot]){color:#f0e820;background:#000;font-weight:700;font-size:12px}
:host([tone=teal]){color:#40d8d8;background:#1e3038}
`,el=>{el.style.setProperty('--tw',el.getAttribute('w')+'px');return '<slot></slot>'});
def('pm-box',`
:host{display:grid;grid-template-columns:repeat(3,1fr);width:50px;flex:none;box-sizing:border-box;height:100%;border-left:1px solid #9a1616;background:#000;color:#c8c8c8;font-size:12px;text-align:center;line-height:16px}
b{font-weight:400;border-right:1px solid #7a1010}`,`<b>+</b><b>-</b><b style="border:0">0</b>`);

/* ---------- pie panel ---------- */
const radar=[
['13:39','银基发展','主力买入','4.12/30.9','r'],['13:39','长航凤凰','主力卖出','3.23/33.6','g'],['13:39','华工科技','区间放量','10.057倍','y'],['13:40','易食股份','区间放量','13.530倍','y'],['13:40','一汽夏利','主力卖出','4.35/30.8','g'],['13:41','长航凤凰','区间放量','9.419倍','y'],['13:41','报 喜 鸟','主力卖出','8.01/49.2','g'],['13:42','鲁西化工','主力卖出','4.60/46.5','g'],['13:42','燕京啤酒','主力买入','6.06/68.1','r'],['13:43','TCL 集团','主力卖出','2.50/36.2','g'],['13:42','亿利能源','主力卖出','9.54/56.3','g'],['13:43','包钢股份','区间放量','6.989倍','y'],['13:43','川投能源','区间放量','7.588倍','y'],['13:43','海通证券','主力买入','10.70/5.1','r'],['13:43','亿利能源','主力卖出','9.59/10.2','g'],['13:43','包钢稀土','主力买入','29.03/1.9','r'],['13:43','江钻股份','撑杆跳高','2.034%','r'],['13:43','兖州煤业','主力买入','19.10/68.2','r'],['13:43','亿利能源','撑杆跳高','2.123%','r'],['13:43','中国建筑','主力卖出','3.36/100','g'],['13:44','亿利能源','区间放量','24.709倍','y'],['13:44','南　玻Ａ','主力卖出','7.20/48.7','g']];
function pie(){const cx=735,cy=180,r=53,p=[[2.08,'#f04a4a'],[13.12,'#8a2c2c'],[34.79,'#4f1a1a'],[25.95,'#1f5a22'],[21.97,'#2f8a30'],[2.08,'#4cc050']];let a=0,s='';
 p.forEach(([v,c])=>{const b=a+v/100*2*Math.PI,x1=cx+r*Math.sin(a),y1=cy-r*Math.cos(a),x2=cx+r*Math.sin(b),y2=cy-r*Math.cos(b);
  s+=`<path d="M${cx} ${cy}L${x1.toFixed(2)} ${y1.toFixed(2)}A${r} ${r} 0 ${v>50?1:0} 1 ${x2.toFixed(2)} ${y2.toFixed(2)}Z" fill="${c}" stroke="#9a1010"/>`;a=b;});return s;}
const tb=(a,b,rows)=>`<div class="tb">`+rows.map((r,i)=>`<div class="l">${i==0?a:i==2?b:''}</div><div>${r[0]}</div><div class="sw"><i style="background:${r[1]}"></i></div><div>${r[2]}</div><div>${r[3]}</div>`).join('')+`</div>`;
def('pie-panel',`
:host{display:flex;flex-direction:column;width:189px;height:594px;overflow:hidden;font-size:12px;color:#b0b0b0}
.h{display:flex;height:21px;box-sizing:border-box;border-bottom:1px solid #9a1616;line-height:19px;font-size:12px;color:#b8b8b8;white-space:nowrap;overflow:hidden;flex:none}
.h span{border-right:1px solid #7a1010;text-align:center;flex:none;box-sizing:border-box}
svg{display:block;flex:none}
.tb{display:grid;grid-template-columns:20px 20px 17px 60px 72px;grid-auto-rows:19px;align-items:center;border-top:1px solid #9a1616;line-height:19px;font-size:13px;height:57px;overflow:hidden;flex:none}
.tb>div{white-space:nowrap}
.tb .l{border-right:1px solid #7a1010;height:19px;padding-left:4px;box-sizing:border-box;font-size:13px}
.tb>div:nth-child(5n+2){padding-left:3px}
.tb>div:nth-child(5n+4),.tb>div:nth-child(5n+5){font-size:12.500px}
.sw i{display:block;width:15px;height:11px}
.f{height:18px;display:flex;flex:none;line-height:18px;font-size:12px;letter-spacing:.5px;border-bottom:1px solid #9a1616;padding-left:1px;white-space:nowrap;overflow:hidden;color:#b8b8b8}
.f span{flex:none;width:27.700px}
.list{display:grid;grid-auto-rows:15px;padding-top:1px;flex:1;overflow:hidden}
.r{display:grid;grid-template-columns:34px 54px 55px 60px;padding-left:2px;line-height:15px;white-space:nowrap;overflow:hidden}
.r span{overflow:hidden}
.r.r1{color:#dc4040}.r.g1{color:#2cd030}.r.y1{color:#c4c044}
`,()=>`<div class="h"><span style="width:19px">柱</span><span style="width:19px">单</span><span style="width:38px">仅主动</span><span style="width:113px;border:0;text-align:left;padding-left:1px">龙虎看盘(成交量/按股</span></div>
<svg width="189" height="105" viewBox="641 128 189 105">${pie()}</svg>`
+tb('买','入',[['大','#f04a4a','300手','2.08%'],['中','#8a2c2c','1888手','13.12%'],['小','#4f1a1a','5006手','34.79%']])
+tb('卖','出',[['大','#4cc050','300手','2.08%'],['中','#2f8a30','3161手','21.97%'],['小','#1f5a22','3734手','25.95%']])
+`<div class="f"><span style="color:#50d8e8;width:29px">全部</span><span style="width:29px">300</span><span>自选</span><span>当前</span><span>设置</span><span>浮出</span><span>扩大</span></div>
<div class="list">${radar.map(r=>`<div class="r ${r[4]}1"><span>${r[0]}</span><span>${r[1]}</span><span>${r[2]}</span><span>${r[3]}</span></div>`).join('')}</div>`);

/* ---------- quote panel ---------- */
const G='#28c828',Yc='#c0bc48',Rd='#d83c3c',Gy='#b8b8b8';
const pv=(l,v,c)=>`<div class="lb${l.length>3?' sm':''}">${l}</div><div class="v" style="color:${c}">${v}</div>`;
const two=(a,b,c,d,e,f)=>`<div class="t2">${pv(a,b,c)}<div></div>${pv(d,e,f)}</div>`;
const ob=(l,p,v,x='')=>`<div class="ob"><div class="lb">${l}</div><div class="v" style="color:${G}">${p}</div><div class="v" style="color:${Yc}">${v}</div><div class="x">${x}</div></div>`;
const flow=(l,v,c,p,pc)=>`<div class="fl"><div class="lb">${l}</div><div class="v" style="color:${c}">${v}</div><div class="v" style="color:${pc}">${p}</div></div>`;
const tk=(t,p,v,f,n)=>`<div class="tk"><div class="v" style="color:${Gy};text-align:left">${t}</div><div class="v" style="color:${G}">${p}</div><div class="v" style="color:${Yc}">${v}</div><div class="v" style="color:${f=='B'?Rd:G}">${f}</div><div class="v" style="color:${Gy}">${n}</div></div>`;
def('quote-panel',`
:host{display:block;width:193px;height:594px;overflow:hidden;color:${Gy}}
.s{box-sizing:border-box;border-bottom:1px solid #9a1616;display:grid;grid-auto-rows:19px;align-content:start}
.hd{height:27px;display:flex;align-items:center;padding-left:51px;border-bottom:1px solid #9a1616;box-sizing:border-box}
.hd b{font:700 14px "Liberation Sans",sans-serif;color:#f4f020;letter-spacing:.4px}.hd span{font-size:15.500px;color:#44c8d8;margin-left:5px}
.t2,.ob,.fl,.tk{display:grid;align-items:center;line-height:19px;height:19px;white-space:nowrap;padding-left:1px}
.t2{grid-template-columns:41px 50px 6px 41px 50px}
.ob{grid-template-columns:41px 50px 56px 42px}
.fl{grid-template-columns:auto 1fr 41px;padding-right:2px}
.tk{grid-template-columns:45px 42px 52px 17px 32px}
.lb{font-size:15px;overflow:visible}
.lb.sm{font-size:13px;letter-spacing:-.6px}
.v{font:700 14px "Liberation Sans",sans-serif;text-align:right;letter-spacing:.2px}
.x{font-size:13px;color:#a83030;text-align:right}
.tks{display:grid;grid-auto-rows:17.800px;padding-top:.5px}.tks .tk{height:17.800px;line-height:17.800px}
`,()=>`<div class="hd"><b>300307</b><span>慈星股份</span></div>
<div class="s" style="height:20px">${two('委比','-19.20%',G,'委差','-153',G)}</div>
<div class="s" style="height:97px;padding-top:1px">${ob('卖五','7.52','30')+ob('卖四','7.51','45')+ob('卖三','7.50','97')+ob('卖二','7.49','12')+ob('卖一','7.47','291')}</div>
<div class="s" style="height:97px;padding-top:1px">${ob('买一','7.46','87')+ob('买二','7.45','157')+ob('买三','7.43','5')+ob('买四','7.42','15')+ob('买五','7.41','58','+10')}</div>
<div class="s" style="height:97px;padding-top:1px">${two('现价','7.47',G,'今开','7.57',G)+two('涨跌','-0.11',G,'最高','7.61',Rd)+two('涨幅','-1.45%',G,'最低','7.47',G)+two('总量','7194',Yc,'量比','0.56',G)+two('外盘','1814',Rd,'内盘','5380',G)}</div>
<div class="s" style="height:60px;padding-top:2px">${two('换手','0.59%',Gy,'股本','8.02亿',Gy)+two('净资','4.97',Gy,'流通','1.22亿',Gy)+two('收益(三)','0.483',Gy,'PE(动)','11.6',Gy)}</div>
<div class="s" style="height:78px">${flow('净流入额','-180.0万',G,'-33%',G)+flow('大宗流入','3146.47',Rd,'0%',Rd)+flow('5日净流入额','-1480万',G,'-21%',G)+flow('5日大宗流入','-416.9万',G,'-6%',G)}</div>
<div class="tks">${tk('13:39','7.50','20','B','1')+tk('13:40','7.49','24','S','4')+tk('13:42','7.49','1','S','1')+tk('13:42','7.49','2','B','1')+tk('13:43','7.48','65','S','4')+tk('13:43','7.47','219','S','19')}</div>`);

/* ---------- status ---------- */
const nm=(t,w)=>`<span class="n" style="width:${w}px">${t}</span>`;
const sb=(r)=>`<svg width="49" height="14" viewBox="0 0 49 14" style="display:block"><rect x=".5" y=".5" width="48" height="5" fill="#fff" stroke="#ddd"/><path d="M10 0v6M20 0v6M30 0v6M40 0v6" stroke="#555"/><rect x="${r}" y="1" width="5" height="4" fill="#e01010"/><path d="M1 11.500h48" stroke="#1c8a20" stroke-width="4" stroke-dasharray="6 2"/></svg>`;
def('status-bar',`
:host{display:flex;align-items:center;height:18px;overflow:hidden;white-space:nowrap;color:#f4f0e0;font-size:12px;
 background:linear-gradient(#2c2008,#6c5a20 35%,#7a6a2c 55%,#3c2c0c)}
.ic{margin-left:2px;width:14px;height:14px;box-sizing:border-box;background:#e8b850;border:1px solid #a06a10;position:relative;flex:none}
.ic:after{content:"";position:absolute;left:2px;right:2px;top:3px;bottom:3px;background:#f8e8a0;border:1px solid #a07010}
.o{font-weight:700;font-size:13px;color:#f08a20;margin-left:4px;width:42px;flex:none}
.n{font-weight:700;color:#1f981f;letter-spacing:.65px;display:inline-block;overflow:hidden;flex:none}
.sp{width:1px;height:16px;background:#b8b090;flex:none}
.w{flex:none}
.mini{display:flex;gap:4px;margin:0 2px;flex:none}
.e{display:flex;align-items:center;margin-left:34px;gap:6px}.e svg{display:block}
`,()=>`<div class="ic"></div><span class="o">观察员</span><span class="w" style="width:24px">上证</span>${nm('2248.99 -29.41 -1.29%',145)}<span class="w" style="width:44px">568.5亿</span><span class="w" style="width:24px">深证</span>${nm('8997.73 -101.56 -1.12%',146)}<span class="w" style="width:45px">513.5亿</span><span class="w" style="width:24px">中小</span>${nm('4532.85 -45.66 -1.00%',145)}<span class="w" style="width:44px">203.3亿</span><div class="sp"></div>
<div class="mini">${sb(20)}${sb(20)}</div><div class="sp"></div><span class="w" style="margin-left:5px;width:89px">VIP_招商济...:38</span>
<div class="e"><svg width="15" height="12" viewBox="0 0 15 12"><rect x=".5" y=".5" width="14" height="11" fill="#e8e8e8" stroke="#aaa"/><path d="M1 1l6.500 6L14 1M1 11l5-5M14 11L9 6" fill="none" stroke="#999"/></svg>
<svg width="12" height="13" viewBox="0 0 12 13"><rect x=".5" y=".5" width="11" height="12" rx="3" fill="#e8d040" stroke="#a08010"/><path d="M6 3l-3 3h2v3h2V6h2z" fill="#806000"/></svg>
<svg width="11" height="15" viewBox="0 0 11 15"><path d="M5.500 4L2 14M5.500 4L9 14M3 10h5M2 2a4 4 0 0 0 0 5M9 2a4 4 0 0 1 0 5" fill="none" stroke="#a09868"/></svg>
<svg width="8" height="13" viewBox="0 0 8 13"><path d="M4 0l4 4H0zM4 4l4 4H0zM0 9h8v2H0z" fill="#b8b090"/></svg>
<svg width="4" height="12" viewBox="0 0 4 12" style="margin-left:4px"><path d="M1 1h2v6H1zM1 9h2v2H1z" fill="#b8b090"/></svg></div>`);

/* ---------- overlays ---------- */
const petal=(a,c)=>`<ellipse cx="0" cy="-14" rx="9.500" ry="13" fill="${c}" transform="rotate(${a})" opacity=".95"/>`;
def('logo-badge',`
:host{position:absolute;left:822px;top:3px;width:202px;height:54px;background:#1e1810;overflow:hidden}
svg{position:absolute;left:2px;top:-1px}
.a{position:absolute;left:62px;top:2px;font-weight:700;font-size:21.500px;line-height:26px;color:#f0941c;white-space:nowrap;text-shadow:1px 1px 0 #7a2a00,-1px 0 0 #a04a00}
.b{position:absolute;left:62px;top:28px;font:italic 700 18.500px/22px "Liberation Sans",sans-serif;color:#f4e838;white-space:nowrap;letter-spacing:.35px;text-shadow:1px 1px 0 #4a3a00}
`,()=>`<svg width="56" height="56" viewBox="-28 -28 56 56">${petal(-20,'#78c8e8')+petal(40,'#c878d8')+petal(100,'#e0689a')+petal(160,'#80c850')+petal(220,'#e87858')+petal(280,'#68c8a8')}<circle r="6" fill="#e8e8d0"/><circle r="3" fill="#806040"/></svg><div class="a">分析家公式网</div><div class="b">www.88gs.com</div>`);
def('float-tip',`
:host{position:absolute;left:811px;top:206px;width:156px;height:18px;box-sizing:border-box;background:#ffffe1;color:#111;font-size:12px;letter-spacing:.2px;line-height:18px;padding-left:1px;white-space:nowrap;overflow:hidden}
`,`<slot></slot>`);
</script>
</body></html>
